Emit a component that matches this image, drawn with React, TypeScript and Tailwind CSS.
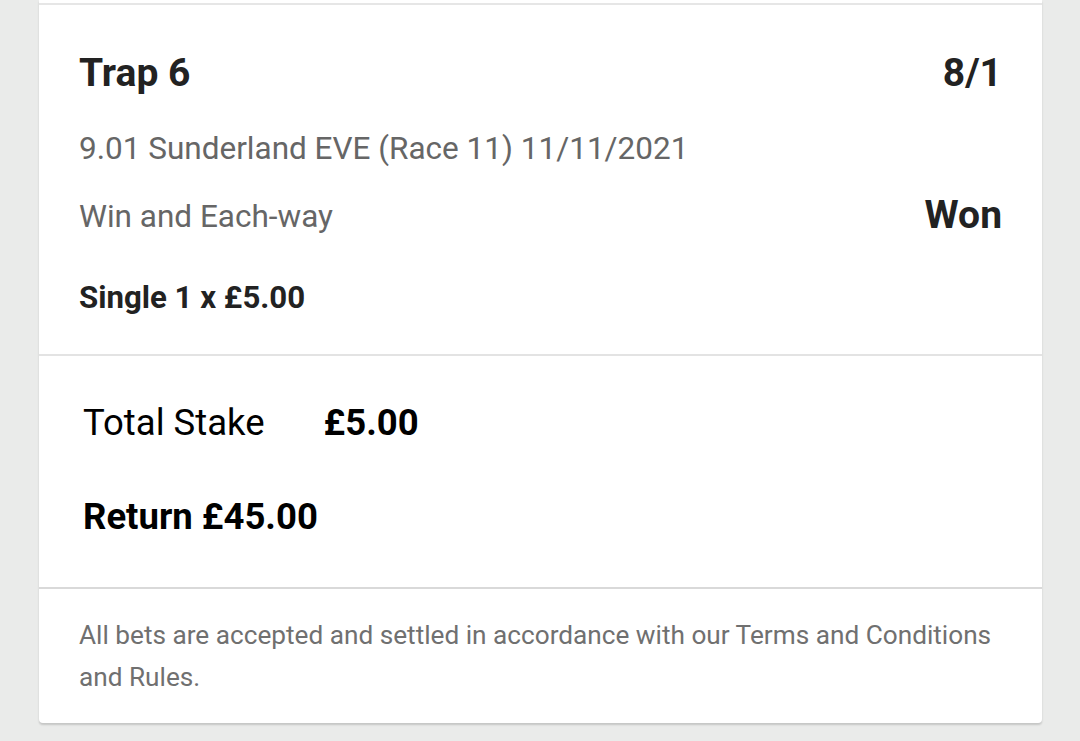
import React from "react";

const bet = {
  selection: "Trap 6",
  odds: "8/1",
  event: "9.01 Sunderland EVE (Race 11) 11/11/2021",
  market: "Win and Each-way",
  result: "Won",
  line: "Single 1 x £5.00",
  stake: "£5.00",
  returns: "£45.00",
};

export default function App() {
  return (
    <div
      className="min-h-[741px] w-[1080px] bg-[#eaebea] overflow-hidden"
      style={{ fontFamily: "Roboto, 'Noto Sans', sans-serif" }}
    >
      <div className="ml-[39px] mr-[38px] bg-white rounded-b-[4px] shadow-[0_2px_2px_rgba(0,0,0,0.16)]">
        {/* end of the previous slip */}
        <div className="h-[3px]" />
        <div className="h-[2px] bg-[#e6e6e6]" />

        {/* selection details */}
        <div className="pl-[40px] pr-[40px] pt-[46px] pb-[38px]">
          <div className="flex justify-between items-center leading-[44px] text-[39px] font-bold text-[#222222]">
            <span>{bet.selection}</span>
            <span>{bet.odds}</span>
          </div>
          <div className="mt-[34px] text-[31.5px] leading-[40px] text-[#666666]">{bet.event}</div>
          <div className="mt-[28px] flex justify-between items-center">
            <span className="text-[31.5px] leading-[40px] text-[#666666]">{bet.market}</span>
            <span className="text-[39px] leading-[40px] font-bold text-[#222222] -mt-[4px]">{bet.result}</span>
          </div>
          <div className="mt-[43px] text-[31.2px] leading-[36px] font-bold text-[#222222]">{bet.line}</div>
        </div>

        <div className="h-[2px] bg-[#e3e3e3]" />

        {/* stake and returns */}
        <div className="pl-[44px] pr-[42px] pt-[45px] pb-[48px] text-black">
          <div className="flex items-center gap-[59px] text-[36.5px] leading-[44px]">
            <span>Total Stake</span>
            <span className="font-bold">{bet.stake}</span>
          </div>
          <div className="mt-[50px] text-[36.5px] leading-[44px] font-bold">Return {bet.returns}</div>
        </div>

        <div className="h-[2px] bg-[#d9d9d9]" />

        {/* terms */}
        <div className="pl-[40px] pr-[40px] pt-[25px] pb-[25px] text-[26.2px] leading-[42px] text-[#707070]">
          All bets are accepted and settled in accordance with our Terms and Conditions and Rules.
        </div>
      </div>
    </div>
  );
}
